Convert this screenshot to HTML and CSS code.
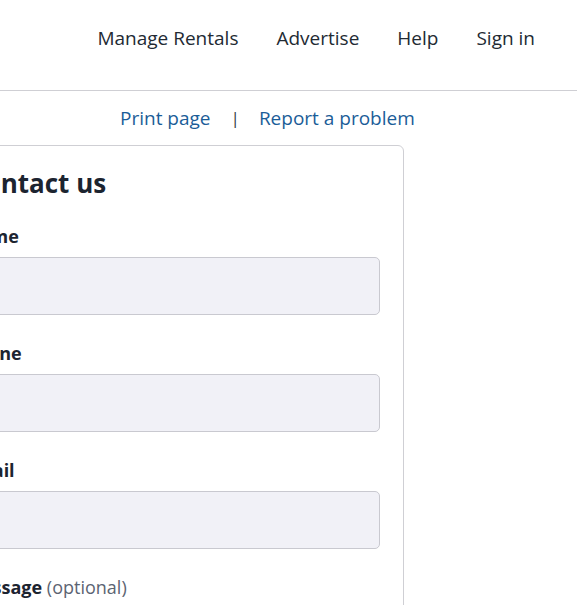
FILE: index.html
```html
<!DOCTYPE html>
<html lang="en">
<head>
<meta charset="utf-8">
<title>Contact us</title>
<link rel="stylesheet" href="styles.css">
</head>
<body>
<header class="site-header">
  <nav class="main-nav">
    <a href="#" class="nav-link">Manage Rentals</a>
    <a href="#" class="nav-link">Advertise</a>
    <a href="#" class="nav-link">Help</a>
    <a href="#" class="nav-link">Sign in</a>
  </nav>
</header>
<main class="page">
  <div class="utility-links">
    <a href="#" class="util-link">Print page</a>
    <span class="util-sep">|</span>
    <a href="#" class="util-link">Report a problem</a>
  </div>
  <section class="card">
    <h1 class="card-title">Contact us</h1>
    <form class="contact-form">
      <div class="field">
        <label class="field-label" for="name">Name</label>
        <input class="field-input" id="name" type="text">
      </div>
      <div class="field">
        <label class="field-label" for="phone">Phone</label>
        <input class="field-input" id="phone" type="tel">
      </div>
      <div class="field">
        <label class="field-label" for="email">Email</label>
        <input class="field-input" id="email" type="email">
      </div>
      <div class="field">
        <label class="field-label" for="message">Message <span class="optional">(optional)</span></label>
        <textarea class="field-input field-textarea" id="message"></textarea>
      </div>
    </form>
  </section>
</main>
</body>
</html>
```

FILE: styles.css
```css
* { box-sizing: border-box; }

html, body {
  margin: 0;
  padding: 0;
  background: #ffffff;
  overflow: hidden;
}

body {
  font-family: "Open Sans", "Noto Sans", sans-serif;
  color: #222a33;
}

.site-header {
  height: 91px;
  border-bottom: 1px solid #cfcfd4;
  display: flex;
  justify-content: flex-end;
  padding-right: 42px;
}

.main-nav {
  display: flex;
  gap: 38px;
  padding-top: 26px;
}

.nav-link {
  font-size: 19px;
  line-height: 24px;
  color: #222a33;
  text-decoration: none;
  white-space: nowrap;
}

.page {
  margin-left: -56px;
  width: 460px;
}

.utility-links {
  display: flex;
  align-items: flex-start;
  padding-left: 176px;
  padding-top: 15px;
  height: 54px;
  width: 600px;
  white-space: nowrap;
}

.util-link {
  font-size: 19px;
  line-height: 24px;
  color: #1b5d98;
  text-decoration: none;
}

.util-sep {
  font-size: 17px;
  line-height: 24px;
  color: #333a44;
  margin: 0 19px 0 20px;
}

.card {
  border: 1px solid #cfcfd4;
  border-radius: 6px;
  padding: 20px 23px 0 23px;
  height: 480px;
}

.card-title {
  margin: 0 0 24px 0;
  font-size: 26px;
  line-height: 34px;
  font-weight: 700;
  color: #1c2430;
}

.contact-form {
  display: flex;
  flex-direction: column;
  gap: 26px;
}

.field {
  display: flex;
  flex-direction: column;
  gap: 9px;
}

.field-label {
  font-size: 18px;
  line-height: 24px;
  font-weight: 700;
  color: #1c2430;
  margin-left: -3px;
  white-space: nowrap;
}

.optional {
  font-weight: 400;
  color: #5b6472;
}

.field-input {
  height: 58px;
  width: 100%;
  border: 1px solid #c9c9d0;
  border-radius: 5px;
  background: #f1f1f7;
  font: inherit;
}

.field-textarea {
  height: 120px;
  resize: none;
}
```
